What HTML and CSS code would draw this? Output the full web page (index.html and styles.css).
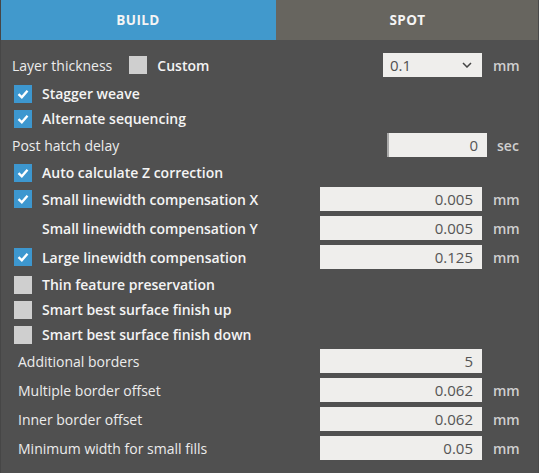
FILE: index.html
```html
<!DOCTYPE html>
<html>
<head>
<meta charset="utf-8">
<link rel="stylesheet" href="styles.css">
</head>
<body>
<div class="app">
  <div class="tabs">
    <div class="tab active">BUILD</div>
    <div class="tab">SPOT</div>
  </div>
  <div class="panel">
    <div class="row r-first">
      <span class="lbl reg">Layer thickness</span>
      <span class="cb off cb-inline"></span>
      <span class="lbl semi">Custom</span>
      <span class="spacer"></span>
      <div class="select"><span>0.1</span>
        <svg class="chev" width="10" height="6" viewBox="0 0 10 6"><path d="M1 1 L5 5 L9 1" fill="none" stroke="#444" stroke-width="1.5"/></svg>
      </div>
      <span class="unit">mm</span>
    </div>

    <div class="crow mt4"><span class="cb on"><svg viewBox="0 0 18 18"><path d="M4.5 9.2 L7.8 12.3 L13.5 5.8" fill="none" stroke="#fff" stroke-width="2.4"/></svg></span><span class="lbl semi">Stagger weave</span></div>
    <div class="crow"><span class="cb on"><svg viewBox="0 0 18 18"><path d="M4.5 9.2 L7.8 12.3 L13.5 5.8" fill="none" stroke="#fff" stroke-width="2.4"/></svg></span><span class="lbl semi">Alternate sequencing</span></div>

    <div class="row mt2">
      <span class="lbl reg">Post hatch delay</span>
      <span class="spacer"></span>
      <div class="field w-sec">0</div>
      <span class="unit u-sec">sec</span>
    </div>

    <div class="crow mt3"><span class="cb on"><svg viewBox="0 0 18 18"><path d="M4.5 9.2 L7.8 12.3 L13.5 5.8" fill="none" stroke="#fff" stroke-width="2.4"/></svg></span><span class="lbl semi">Auto calculate Z correction</span></div>

    <div class="row mt2">
      <span class="cb on"><svg viewBox="0 0 18 18"><path d="M4.5 9.2 L7.8 12.3 L13.5 5.8" fill="none" stroke="#fff" stroke-width="2.4"/></svg></span>
      <span class="lbl semi">Small linewidth compensation X</span>
      <span class="spacer"></span>
      <div class="field w-wide">0.005</div>
      <span class="unit">mm</span>
    </div>
    <div class="row">
      <span class="cb none"></span>
      <span class="lbl semi">Small linewidth compensation Y</span>
      <span class="spacer"></span>
      <div class="field w-wide">0.005</div>
      <span class="unit">mm</span>
    </div>
    <div class="row">
      <span class="cb on"><svg viewBox="0 0 18 18"><path d="M4.5 9.2 L7.8 12.3 L13.5 5.8" fill="none" stroke="#fff" stroke-width="2.4"/></svg></span>
      <span class="lbl semi">Large linewidth compensation</span>
      <span class="spacer"></span>
      <div class="field w-wide">0.125</div>
      <span class="unit">mm</span>
    </div>

    <div class="crow mt3"><span class="cb off"></span><span class="lbl semi">Thin feature preservation</span></div>
    <div class="crow"><span class="cb off"></span><span class="lbl semi">Smart best surface finish up</span></div>
    <div class="crow"><span class="cb off"></span><span class="lbl semi">Smart best surface finish down</span></div>

    <div class="row mt2 indent">
      <span class="lbl reg">Additional borders</span>
      <span class="spacer"></span>
      <div class="field w-wide">5</div>
      <span class="unit"></span>
    </div>
    <div class="row indent">
      <span class="lbl reg">Multiple border offset</span>
      <span class="spacer"></span>
      <div class="field w-wide">0.062</div>
      <span class="unit">mm</span>
    </div>
    <div class="row indent">
      <span class="lbl reg">Inner border offset</span>
      <span class="spacer"></span>
      <div class="field w-wide">0.062</div>
      <span class="unit">mm</span>
    </div>
    <div class="row indent">
      <span class="lbl reg">Minimum width for small fills</span>
      <span class="spacer"></span>
      <div class="field w-wide">0.05</div>
      <span class="unit">mm</span>
    </div>
  </div>
</div>
</body>
</html>
```

FILE: styles.css
```css
html, body {
  margin: 0;
  padding: 0;
  background: #505050;
}
body {
  font-family: "Open Sans", "Noto Sans", sans-serif;
  font-size: 14px;
  color: #f2f2f2;
}
.app {
  width: 539px;
  height: 473px;
  background: #505050;
  box-sizing: border-box;
  border-left: 1px solid #464646;
  border-right: 1px solid #4a4a4a;
  overflow: hidden;
}
.tabs {
  display: flex;
  height: 40px;
  margin-left: -1px;
  margin-right: -1px;
}
.tab {
  flex: 1 1 0;
  display: flex;
  align-items: center;
  justify-content: center;
  background: #67655f;
  color: #f4f4f4;
  font-weight: 700;
  font-size: 13.5px;
  letter-spacing: 0.4px;
  padding-bottom: 1px;
}
.tab.active {
  background: #4199cc;
  flex: 0 0 276px;
}
.panel {
  padding: 13px 0 0 11px;
}
.row {
  display: flex;
  align-items: center;
  height: 24px;
  margin-top: 5px;
}
.r-first { margin-top: 0; }
.crow {
  display: flex;
  align-items: center;
  height: 25px;
}
.mt2 { margin-top: 2px; }
.mt3 { margin-top: 3px; }
.mt4 { margin-top: 4px; }
.indent { padding-left: 6px; }
.lbl { white-space: nowrap; }
.reg { font-weight: 400; color: #ececec; }
.semi { font-weight: 600; color: #f4f4f4; }
.spacer { flex: 1; }
.cb {
  width: 18px;
  height: 18px;
  flex: 0 0 18px;
  margin-left: 2px;
  margin-right: 10px;
  display: inline-block;
}
.cb svg { width: 18px; height: 18px; display: block; }
.cb.on { background: #3d97cf; }
.cb.off { background: #cfcfcf; }
.cb.none { background: transparent; }
.cb-inline { margin-left: 17px; margin-right: 10px; }
.select {
  width: 99px;
  height: 24px;
  box-sizing: border-box;
  background: #efeeec;
  color: #505050;
  display: flex;
  align-items: center;
  justify-content: space-between;
  padding: 0 10px 0 7px;
  font-size: 15px;
}
.chev { display: block; }
.field {
  height: 24px;
  box-sizing: border-box;
  background: #efeeec;
  color: #555;
  text-align: right;
  padding-right: 9px;
  line-height: 24px;
  font-size: 15px;
}
.w-wide { width: 162px; }
.w-sec { width: 100px; border-left: 2px solid #a9a9a9; }
.unit {
  width: 56px;
  padding-left: 11px;
  box-sizing: border-box;
  color: #cfcfcf;
  font-weight: 600;
}
.u-sec {
  width: 51px;
  padding-left: 10px;
}
```
